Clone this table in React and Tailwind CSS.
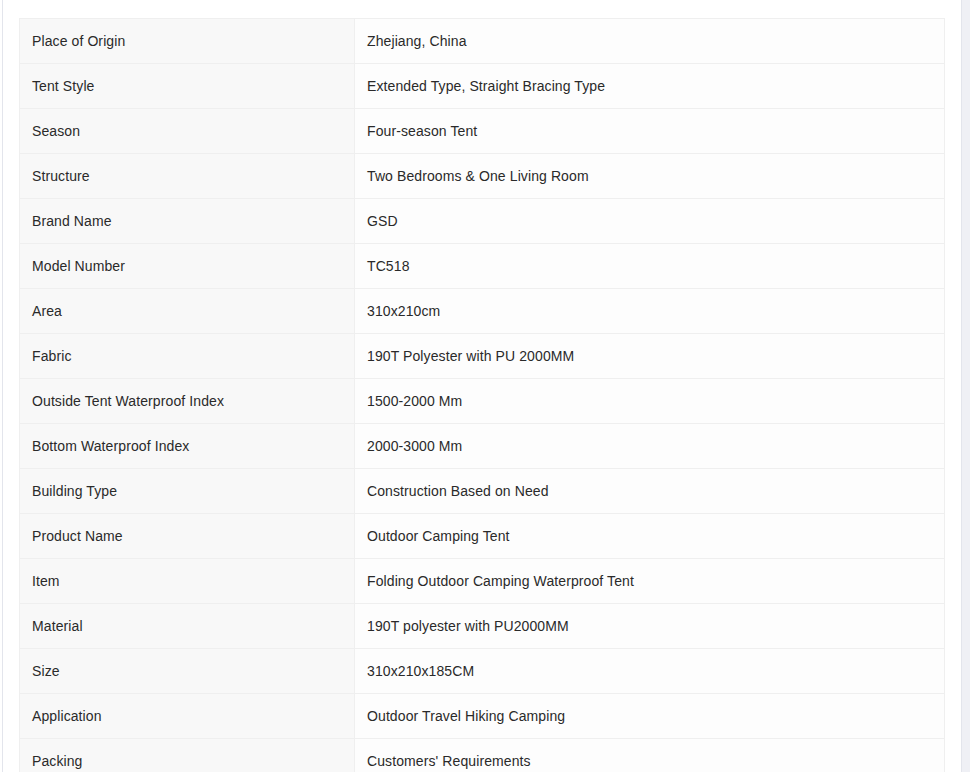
const rows = [
  ["Place of Origin", "Zhejiang, China"],
  ["Tent Style", "Extended Type, Straight Bracing Type"],
  ["Season", "Four-season Tent"],
  ["Structure", "Two Bedrooms & One Living Room"],
  ["Brand Name", "GSD"],
  ["Model Number", "TC518"],
  ["Area", "310x210cm"],
  ["Fabric", "190T Polyester with PU 2000MM"],
  ["Outside Tent Waterproof Index", "1500-2000 Mm"],
  ["Bottom Waterproof Index", "2000-3000 Mm"],
  ["Building Type", "Construction Based on Need"],
  ["Product Name", "Outdoor Camping Tent"],
  ["Item", "Folding Outdoor Camping Waterproof Tent"],
  ["Material", "190T polyester with PU2000MM"],
  ["Size", "310x210x185CM"],
  ["Application", "Outdoor Travel Hiking Camping"],
  ["Packing", "Customers' Requirements"],
];

export default function App() {
  return (
    <div
      className="flex h-[772px] w-[970px] overflow-hidden bg-white text-[14px] tracking-[0.1px] text-[#2a2a2a]"
      style={{ fontFamily: '"Liberation Sans", Arial, sans-serif' }}
    >
      <div className="w-[2px] shrink-0 bg-white" />
      <div className="w-[960px] shrink-0 border-l border-r border-[#e3e5ec] bg-white px-4 pt-[18px]">
        <div className="border-l border-r border-t border-[#efefef]">
          {rows.map(([k, v]) => (
            <div key={k} className="grid h-[45px] grid-cols-[335px_1fr] border-b border-[#efefef]">
              <div className="flex items-center border-r border-[#efefef] bg-[#f8f8f8] pl-3">{k}</div>
              <div className="flex items-center bg-[#fdfdfd] pl-3">{v}</div>
            </div>
          ))}
        </div>
      </div>
      <div className="flex-1 bg-[#eff0f5]" />
    </div>
  );
}
